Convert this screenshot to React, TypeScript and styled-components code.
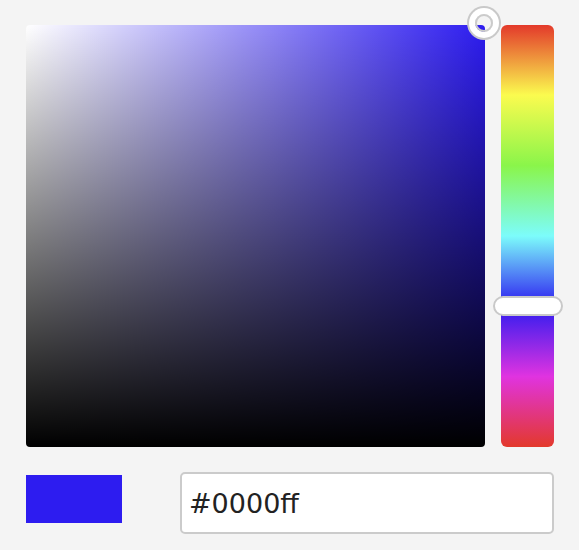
import styled, { createGlobalStyle } from "styled-components";

const GlobalStyle = createGlobalStyle`
  html, body {
    margin: 0;
    background: #f4f4f4;
  }
  * {
    box-sizing: border-box;
  }
`;

const Picker = styled.div`
  width: 579px;
  height: 550px;
  padding: 25px 25px 0 26px;
  background: #f4f4f4;
  font-family: "DejaVu Sans", sans-serif;
`;

const TopRow = styled.div`
  display: flex;
  gap: 16px;
  height: 422px;
`;

const SaturationArea = styled.div<{ $hue: string }>`
  position: relative;
  width: 459px;
  height: 100%;
  border-radius: 4px;
  background:
    linear-gradient(to top, #000, rgba(0, 0, 0, 0)),
    linear-gradient(to right, #fff, rgba(255, 255, 255, 0)),
    ${(p) => p.$hue};
`;

const SaturationHandle = styled.div`
  position: absolute;
  width: 18px;
  height: 18px;
  border-radius: 50%;
  border: 2px solid #cbcbcb;
  box-shadow: 0 0 0 6px #fff, 0 0 0 8px #c9c9c9;
  transform: translate(-50%, -50%);
`;

const HueStrip = styled.div`
  position: relative;
  width: 53px;
  height: 100%;
  border-radius: 6px;
  background: linear-gradient(
    to bottom,
    #e3392b 0%,
    #fbfb4f 16.6%,
    #8af54a 33.3%,
    #7cfcfb 50%,
    #2d1cf0 66.6%,
    #e033e0 83.3%,
    #e3392b 100%
  );
`;

const HueHandle = styled.div`
  position: absolute;
  left: 50%;
  width: 70px;
  height: 20px;
  border-radius: 10px;
  background: #fff;
  border: 2px solid #c9c9c9;
  transform: translate(-50%, -50%);
`;

const BottomRow = styled.div`
  display: flex;
  align-items: flex-start;
  gap: 58px;
  margin-top: 25px;
`;

const Swatch = styled.div<{ $color: string }>`
  width: 96px;
  height: 48px;
  margin-top: 3px;
  background: ${(p) => p.$color};
`;

const HexInput = styled.input`
  width: 374px;
  height: 62px;
  padding: 0 0 0 7px;
  border: 2px solid #cbcbcb;
  border-radius: 5px;
  background: #fff;
  color: #222;
  font-family: "DejaVu Sans", sans-serif;
  font-size: 27px;
  outline: none;
`;

export default function App() {
  const shown = "#2d1cf0";
  const satX = 458;
  const satY = -2;
  const hueY = 281;

  return (
    <>
      <GlobalStyle />
      <Picker>
        <TopRow>
          <SaturationArea $hue={shown}>
            <SaturationHandle style={{ left: satX, top: satY }} />
          </SaturationArea>
          <HueStrip>
            <HueHandle style={{ top: hueY }} />
          </HueStrip>
        </TopRow>
        <BottomRow>
          <Swatch $color={shown} />
          <HexInput defaultValue="#0000ff" />
        </BottomRow>
      </Picker>
    </>
  );
}
